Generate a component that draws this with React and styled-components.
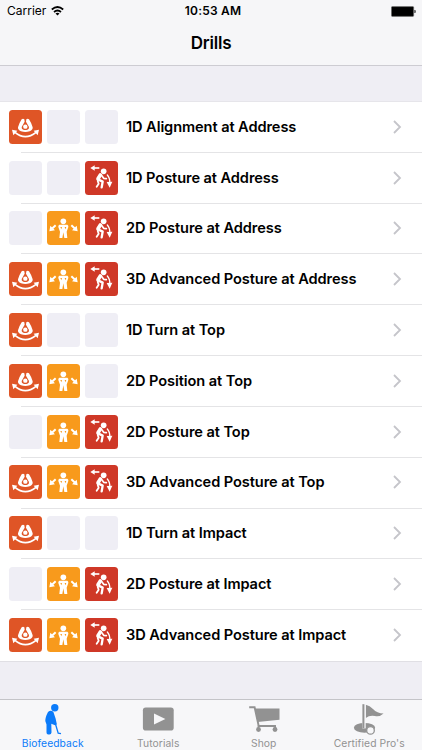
import styled, { createGlobalStyle } from 'styled-components';

const GlobalStyle = createGlobalStyle`
  * {
    box-sizing: border-box;
  }

  body {
    margin: 0;
    background: #efeef4;
    color: #000;
    font-family: Inter, 'Liberation Sans', sans-serif;
  }
`;

const Screen = styled.div`
  display: flex;
  flex-direction: column;
  height: 750px;
  overflow: hidden;
`;

const Header = styled.header`
  height: 66px;
  background: #f6f6f8;
  border-bottom: 1px solid #cdccd2;
`;

const StatusBar = styled.div`
  display: grid;
  grid-template-columns: 1fr auto 1fr;
  align-items: center;
  height: 22px;
  padding: 0 6px 0 7px;
  font-size: 12px;
  line-height: 22px;
`;

const Carrier = styled.div`
  display: flex;
  align-items: center;
  gap: 5px;
`;

const Time = styled.div`
  font-size: 12px;
  font-weight: 600;
  letter-spacing: 0.2px;
  padding-left: 3px;
`;

const Battery = styled.svg`
  justify-self: end;
  width: 25px;
  height: 11px;
`;

const Title = styled.h1`
  margin: 0;
  height: 43px;
  font-size: 17px;
  font-weight: 600;
  line-height: 43px;
  letter-spacing: -0.2px;
  text-align: center;
`;

const List = styled.ul`
  margin: 35px 0 0;
  padding: 0;
  list-style: none;
  background: #fff;
  border-top: 1px solid #e6e5ea;
  border-bottom: 1px solid #e0dfe4;
`;

const Row = styled.li`
  display: flex;
  align-items: center;
  height: 50.82px;
  padding: 0 20px 1.4px 9.4px;
  background: linear-gradient(#e4e4e6, #e4e4e6) 21px 100% / 100% 1px no-repeat;

  &:last-child {
    background: none;
  }
`;

const Tiles = styled.div`
  display: flex;
  gap: 4.7px;
`;

const Tile = styled.div`
  width: 33px;
  height: 34px;
  border-radius: 3.5px;
  background: ${({ $color }) => $color || '#efeef5'};

  svg {
    display: block;
    width: 33px;
    height: 34px;
  }
`;

const Label = styled.span`
  flex: 1;
  margin-left: 8.2px;
  font-size: 14.6px;
  font-weight: 600;
  letter-spacing: -0.08px;
  white-space: nowrap;
`;

const Chevron = styled.svg`
  width: 9px;
  height: 14px;
`;

const TabBar = styled.nav`
  display: grid;
  grid-template-columns: repeat(4, 1fr);
  height: 51px;
  margin-top: auto;
  background: #f7f7f9;
  border-top: 1px solid #c4c4c8;
`;

const Tab = styled.div`
  display: flex;
  flex-direction: column;
  align-items: center;
  color: ${({ $active }) => ($active ? '#0b7bfa' : '#929292')};
  font-size: 10.3px;
  line-height: 15px;
  letter-spacing: 0.08px;
  white-space: nowrap;

  svg {
    width: 40px;
    height: 36px;
  }
`;

const TurnIcon = () => (
  <svg viewBox="0 0 99 102" fill="#fff">
    <path
      fillRule="evenodd"
      d="M38 28q4-4 8 0l1 7h4l1-7q4-4 8 0q8 12 11 24q1 8-9 12q-13 4-26 0q-10-4-9-12q3-12 11-24zM47 35l-9 16q-1 6 5 8q6 2 12 0q6-2 5-8l-9-16z"
    />
    <circle cx="49" cy="50" r="6.5" />
    <path d="M18 67Q49 93 81 67" fill="none" stroke="#fff" strokeWidth="5" />
    <path d="M9 59l16 3-12 14zM90 59l-16 3 12 14z" />
  </svg>
);

const PositionIcon = () => (
  <svg viewBox="0 0 99 102" fill="#fff">
    <circle cx="49" cy="31" r="8.5" />
    <path
      fillRule="evenodd"
      d="M37 41h24q4 2 3 7l-5 14 2 19h-9l-3-17-3 17h-9l2-19-5-14q-1-5 3-7zM40 48l3 7 2-7zM58 48l-3 7-2-7z"
    />
    <path d="M26 43L14 54M73 43l12 11" stroke="#fff" strokeWidth="6" />
    <path d="M7 61l3-17 14 14zM92 61l-3-17-14 14z" />
  </svg>
);

const PostureIcon = () => (
  <svg viewBox="0 0 99 102" fill="#fff">
    <circle cx="56" cy="31" r="8.5" />
    <path d="M26 21h17" stroke="#fff" strokeWidth="5" />
    <path d="M16 21l13-8v16z" />
    <g fill="none" stroke="#fff" strokeLinecap="round" strokeLinejoin="round">
      <path d="M46 42L39 53" strokeWidth="11" />
      <path d="M39 55l14 7-3 17" strokeWidth="7" />
      <path d="M38 59l3 9-6 9" strokeWidth="5.5" />
      <path d="M49 42l7 10 8 1" strokeWidth="5" />
      <path d="M67 42q9 10 7 25" strokeWidth="4" />
    </g>
    <path d="M65 63l17-1-8 18z" />
  </svg>
);

const GolferIcon = () => (
  <svg viewBox="0 0 40 36" fill="currentColor">
    <circle cx="21.8" cy="7.7" r="3.7" />
    <path d="M15 11.9q3-2.4 5.4.2l2.2 6.3 1.2 5.6q-.6 1.6-2.4 1.1l-3.1-1.3.2 8.7q-.2 2-2 2h-1.2q-1.8 0-1.8-2v-8l-1.2-3.5q-.2-3.5 2.7-9.1z" />
    <path d="M22.4 23.8l2.8 9.4 2.8.5" fill="none" stroke="currentColor" strokeWidth="1.3" />
  </svg>
);

const VideoIcon = () => (
  <svg viewBox="0 0 40 36">
    <rect x="4.9" y="7.5" width="30.8" height="23" rx="2.8" fill="currentColor" />
    <path d="M16 13.6l11.4 5.5L16 24.6z" fill="#f7f7f9" />
  </svg>
);

const CartIcon = () => (
  <svg viewBox="0 0 40 36" fill="currentColor">
    <path d="M5.2 7.3h5.4l4.1 18.7h17.2" fill="none" stroke="currentColor" strokeWidth="1.9" />
    <path d="M11.2 8.5h24.3v11.3L13.6 22z" />
    <circle cx="14.5" cy="29.5" r="2.4" />
    <circle cx="31" cy="29.5" r="2.4" />
    <path d="M13.7 25.3h1.6v4h-1.6zM30.3 25.3H32v4h-1.7z" />
  </svg>
);

const FlagIcon = () => (
  <svg viewBox="0 0 40 36">
    <g fill="currentColor">
      <ellipse cx="15.5" cy="27.8" rx="10.6" ry="4.9" />
      <path d="M16.8 4.7q4 .8 7.2 4.3 4 4.4 10.6 4.5-3.6 3.5-8.6 2.6-5.5-1-9.2 1.8z" />
    </g>
    <path d="M15 4.4v24" stroke="#f7f7f9" strokeWidth="3.4" />
    <path d="M14.4 4.2v24" stroke="currentColor" strokeWidth="2" />
    <circle cx="21.5" cy="30.4" r="3.8" fill="#f7f7f9" stroke="currentColor" strokeWidth="1.3" />
  </svg>
);

const TILES = [
  { key: 'turn', color: '#df5526', Icon: TurnIcon },
  { key: 'position', color: '#f89a1c', Icon: PositionIcon },
  { key: 'posture', color: '#cf3827', Icon: PostureIcon },
];

const DRILLS = [
  { name: '1D Alignment at Address', uses: ['turn'] },
  { name: '1D Posture at Address', uses: ['posture'] },
  { name: '2D Posture at Address', uses: ['position', 'posture'] },
  { name: '3D Advanced Posture at Address', uses: ['turn', 'position', 'posture'] },
  { name: '1D Turn at Top', uses: ['turn'] },
  { name: '2D Position at Top', uses: ['turn', 'position'] },
  { name: '2D Posture at Top', uses: ['position', 'posture'] },
  { name: '3D Advanced Posture at Top', uses: ['turn', 'position', 'posture'] },
  { name: '1D Turn at Impact', uses: ['turn'] },
  { name: '2D Posture at Impact', uses: ['position', 'posture'] },
  { name: '3D Advanced Posture at Impact', uses: ['turn', 'position', 'posture'] },
];

const DrillRow = ({ name, uses }) => (
  <Row>
    <Tiles>
      {TILES.map(({ key, color, Icon }) => {
        const on = uses.includes(key);
        return (
          <Tile key={key} $color={on && color}>
            {on && <Icon />}
          </Tile>
        );
      })}
    </Tiles>
    <Label>{name}</Label>
    <Chevron viewBox="0 0 9 14">
      <path d="M1 1l6 6-6 6" fill="none" stroke="#c5c5ca" strokeWidth="1.8" />
    </Chevron>
  </Row>
);

const App = () => {
  return (
    <Screen>
      <GlobalStyle />
      <Header>
        <StatusBar>
          <Carrier>
            Carrier
            <svg width="13" height="10" viewBox="0 0 13 10" fill="none" stroke="#000" strokeWidth="1.7">
              <path d="M.8 3.5q5.7-5 11.4 0M3 6q3.5-3 7 0" />
              <path d="M4.5 7.4q2-1.5 4 0l-2 2.2z" fill="#000" stroke="none" />
            </svg>
          </Carrier>
          <Time>10:53 AM</Time>
          <Battery viewBox="0 0 25 11">
            <rect x=".4" y=".6" width="22.3" height="9.8" rx="1" fill="#000" stroke="#777" strokeWidth=".6" />
            <path d="M23.5 4h.8q.7 1.5 0 3h-.8z" />
          </Battery>
        </StatusBar>
        <Title>Drills</Title>
      </Header>
      <List>
        {DRILLS.map((drill) => (
          <DrillRow key={drill.name} {...drill} />
        ))}
      </List>
      <TabBar>
        <Tab $active>
          <GolferIcon />
          Biofeedback
        </Tab>
        <Tab>
          <VideoIcon />
          Tutorials
        </Tab>
        <Tab>
          <CartIcon />
          Shop
        </Tab>
        <Tab>
          <FlagIcon />
          Certified Pro's
        </Tab>
      </TabBar>
    </Screen>
  );
};

export default App;
